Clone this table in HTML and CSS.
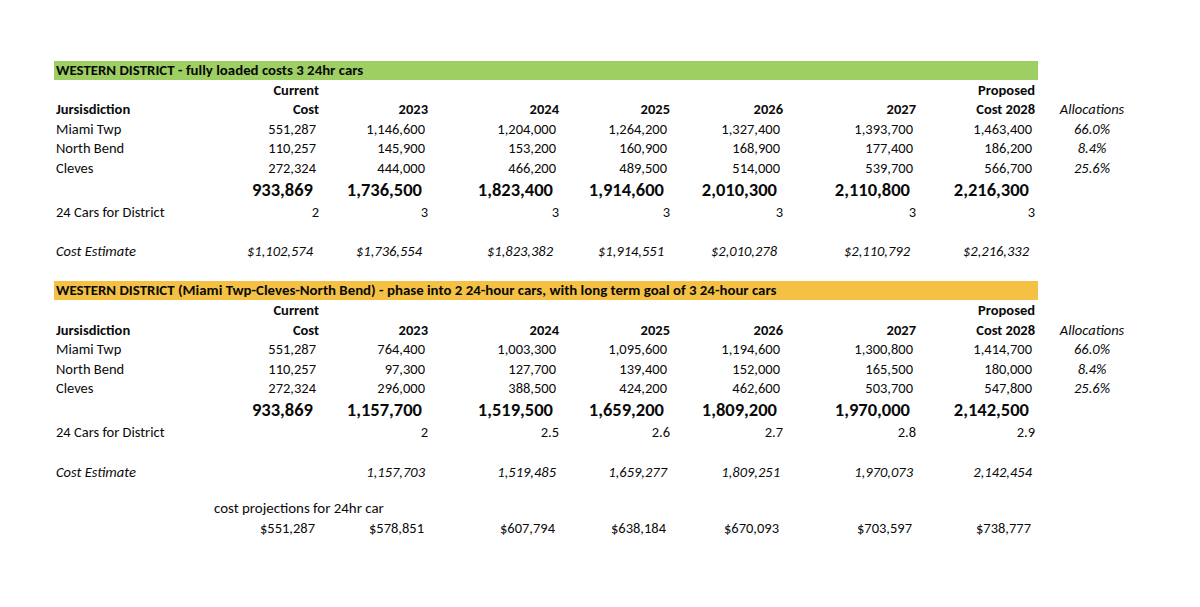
FILE: index.html
```html
<!DOCTYPE html>
<html lang="en">
<head>
<meta charset="utf-8">
<title>Western District cost projections</title>
<link rel="stylesheet" href="styles.css">
</head>
<body>
<main class="sheet">
  <section class="block">
    <div class="row bar green"><span class="bar-text">WESTERN DISTRICT - fully loaded costs 3 24hr cars</span></div>
    <div class="row">
      <span></span><span class="h">Current</span><span></span><span></span><span></span><span></span><span></span><span class="h">Proposed</span><span></span>
    </div>
    <div class="row">
      <span class="lab b">Jursisdiction</span><span class="h">Cost</span><span class="h">2023</span><span class="h">2024</span><span class="h">2025</span><span class="h">2026</span><span class="h">2027</span><span class="h">Cost 2028</span><span class="al">Allocations</span>
    </div>
    <div class="row">
      <span class="lab">Miami Twp</span><span class="n">551,287</span><span class="n">1,146,600</span><span class="n">1,204,000</span><span class="n">1,264,200</span><span class="n">1,327,400</span><span class="n">1,393,700</span><span class="n">1,463,400</span><span class="al">66.0%</span>
    </div>
    <div class="row">
      <span class="lab">North Bend</span><span class="n">110,257</span><span class="n">145,900</span><span class="n">153,200</span><span class="n">160,900</span><span class="n">168,900</span><span class="n">177,400</span><span class="n">186,200</span><span class="al">8.4%</span>
    </div>
    <div class="row">
      <span class="lab">Cleves</span><span class="n">272,324</span><span class="n">444,000</span><span class="n">466,200</span><span class="n">489,500</span><span class="n">514,000</span><span class="n">539,700</span><span class="n">566,700</span><span class="al">25.6%</span>
    </div>
    <div class="row total">
      <span></span><span class="t">933,869</span><span class="t">1,736,500</span><span class="t">1,823,400</span><span class="t">1,914,600</span><span class="t">2,010,300</span><span class="t">2,110,800</span><span class="t">2,216,300</span><span></span>
    </div>
    <div class="row">
      <span class="lab">24 Cars for District</span><span class="c">2</span><span class="c">3</span><span class="c">3</span><span class="c">3</span><span class="c">3</span><span class="c">3</span><span class="c">3</span><span></span>
    </div>
    <div class="row"></div>
    <div class="row">
      <span class="lab i">Cost Estimate</span><span class="e">$1,102,574</span><span class="e">$1,736,554</span><span class="e">$1,823,382</span><span class="e">$1,914,551</span><span class="e">$2,010,278</span><span class="e">$2,110,792</span><span class="e">$2,216,332</span><span></span>
    </div>
    <div class="row"></div>
  </section>

  <section class="block">
    <div class="row bar orange"><span class="bar-text">WESTERN DISTRICT (Miami Twp-Cleves-North Bend) - phase into 2 24-hour cars, with long term goal of 3 24-hour cars</span></div>
    <div class="row">
      <span></span><span class="h">Current</span><span></span><span></span><span></span><span></span><span></span><span class="h">Proposed</span><span></span>
    </div>
    <div class="row">
      <span class="lab b">Jursisdiction</span><span class="h">Cost</span><span class="h">2023</span><span class="h">2024</span><span class="h">2025</span><span class="h">2026</span><span class="h">2027</span><span class="h">Cost 2028</span><span class="al">Allocations</span>
    </div>
    <div class="row">
      <span class="lab">Miami Twp</span><span class="n">551,287</span><span class="n">764,400</span><span class="n">1,003,300</span><span class="n">1,095,600</span><span class="n">1,194,600</span><span class="n">1,300,800</span><span class="n">1,414,700</span><span class="al">66.0%</span>
    </div>
    <div class="row">
      <span class="lab">North Bend</span><span class="n">110,257</span><span class="n">97,300</span><span class="n">127,700</span><span class="n">139,400</span><span class="n">152,000</span><span class="n">165,500</span><span class="n">180,000</span><span class="al">8.4%</span>
    </div>
    <div class="row">
      <span class="lab">Cleves</span><span class="n">272,324</span><span class="n">296,000</span><span class="n">388,500</span><span class="n">424,200</span><span class="n">462,600</span><span class="n">503,700</span><span class="n">547,800</span><span class="al">25.6%</span>
    </div>
    <div class="row total">
      <span></span><span class="t">933,869</span><span class="t">1,157,700</span><span class="t">1,519,500</span><span class="t">1,659,200</span><span class="t">1,809,200</span><span class="t">1,970,000</span><span class="t">2,142,500</span><span></span>
    </div>
    <div class="row">
      <span class="lab">24 Cars for District</span><span></span><span class="c">2</span><span class="c">2.5</span><span class="c">2.6</span><span class="c">2.7</span><span class="c">2.8</span><span class="c">2.9</span><span></span>
    </div>
    <div class="row"></div>
    <div class="row">
      <span class="lab i">Cost Estimate</span><span></span><span class="e e2">1,157,703</span><span class="e e2">1,519,485</span><span class="e e2">1,659,277</span><span class="e e2">1,809,251</span><span class="e e2">1,970,073</span><span class="e e2">2,142,454</span><span></span>
    </div>
    <div class="row gap-short"></div>
    <div class="row note-row"><span class="note">cost projections for 24hr car</span></div>
    <div class="row">
      <span></span><span class="p">$551,287</span><span class="p">$578,851</span><span class="p">$607,794</span><span class="p">$638,184</span><span class="p">$670,093</span><span class="p">$703,597</span><span class="p">$738,777</span><span></span>
    </div>
  </section>
</main>
</body>
</html>
```

FILE: styles.css
```css
html, body {
  margin: 0;
  padding: 0;
  background: #ffffff;
}

body {
  font-family: "Carlito", "Lato", "Liberation Sans", sans-serif;
  font-size: 14.5px;
  color: #0a0a0a;
  width: 1200px;
  height: 607px;
  overflow: hidden;
}

.sheet {
  padding: 60.5px 0 0 54px;
}

.row {
  display: grid;
  grid-template-columns: 176px 92px 109px 131px 111px 113px 133px 119px 108px;
  height: 19.6px;
  align-items: center;
  white-space: nowrap;
  line-height: 1;
}

.row.total {
  height: 24.4px;
}

.row.gap-short {
  height: 16.8px;
}

.bar {
  width: 984px;
  display: flex;
  align-items: center;
  padding-left: 2px;
  box-sizing: border-box;
}

.green { background: #9dcf62; }
.orange { background: #f4c144; }

.bar-text {
  font-weight: 700;
  font-size: 14.85px;
}

.lab {
  padding-left: 2px;
}

.b { font-weight: 700; }
.i { font-style: italic; }

.h {
  font-weight: 700;
  text-align: right;
  padding-right: 3px;
}

.n {
  text-align: right;
  padding-right: 6px;
}

.t {
  font-weight: 700;
  font-size: 18.5px;
  text-align: right;
  padding-right: 9px;
}

.c {
  text-align: right;
  padding-right: 3px;
}

.e {
  font-style: italic;
  text-align: right;
  padding-right: 9px;
}

.e.e2 {
  padding-right: 6px;
}

.p {
  text-align: right;
  padding-right: 7px;
}

.al {
  font-style: italic;
  text-align: center;
}

.note-row {
  display: flex;
}

.note {
  padding-left: 160px;
  font-size: 14.9px;
}
```
